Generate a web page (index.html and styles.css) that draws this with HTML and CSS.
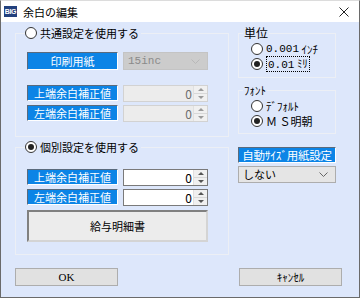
FILE: index.html
```html
<!DOCTYPE html>
<html lang="ja">
<head>
  <meta charset="UTF-8">
  <title>余白の編集</title>
  <link rel="stylesheet" href="styles.css">
</head>
<body>
  <div class="window">
    <!-- Title bar -->
    <div class="titlebar">
      <span class="app-icon">BIG</span>
      <span class="title">余白の編集</span>
      <span class="close">
        <svg width="10" height="10" viewBox="0 0 10 10"><path d="M0.5 0.5L9.5 9.5M9.5 0.5L0.5 9.5" stroke="#222" stroke-width="1"/></svg>
      </span>
    </div>

    <div class="client">
      <div class="panes">
        <div class="col-left">
          <!-- Common settings -->
          <fieldset class="group g-common">
            <legend><span class="radio"></span>共通設定を使用する</legend>
            <div class="row row-paper">
              <span class="tag">印刷用紙</span>
              <div class="select disabled">
                <span class="mono">15inc</span>
                <svg width="9" height="5" viewBox="0 0 9 5"><path d="M0.5 0.5L4.5 4.5L8.5 0.5" fill="none" stroke="#b8b8b8"/></svg>
              </div>
            </div>
            <div class="rows">
              <div class="row">
                <span class="tag">上端余白補正値</span>
                <div class="spin disabled"><span class="val">0</span><span class="arrows"><i class="up"></i><i class="down"></i></span></div>
              </div>
              <div class="row">
                <span class="tag">左端余白補正値</span>
                <div class="spin disabled"><span class="val">0</span><span class="arrows"><i class="up"></i><i class="down"></i></span></div>
              </div>
            </div>
          </fieldset>

          <!-- Individual settings -->
          <fieldset class="group g-own">
            <legend><span class="radio on"></span>個別設定を使用する</legend>
            <div class="rows">
              <div class="row">
                <span class="tag">上端余白補正値</span>
                <div class="spin"><span class="val">0</span><span class="arrows"><i class="up"></i><i class="down"></i></span></div>
              </div>
              <div class="row">
                <span class="tag">左端余白補正値</span>
                <div class="spin"><span class="val">0</span><span class="arrows"><i class="up"></i><i class="down"></i></span></div>
              </div>
            </div>
            <div class="doc-box">給与明細書</div>
          </fieldset>
        </div>

        <div class="col-right">
          <fieldset class="group g-unit">
            <legend>単位</legend>
            <div class="opt"><span class="radio"></span><span class="mono">0.001</span>&nbsp;<span class="kana">ｲﾝﾁ</span></div>
            <div class="opt"><span class="radio on"></span><span class="focus"><span class="mono">0.01</span>&nbsp;<span class="kana">ﾐﾘ</span></span></div>
          </fieldset>

          <fieldset class="group g-font">
            <legend class="kana">ﾌｫﾝﾄ</legend>
            <div class="opt"><span class="radio"></span><span class="kana">ﾃﾞﾌｫﾙﾄ</span></div>
            <div class="opt"><span class="radio on"></span><span>Ｍ Ｓ明朝</span></div>
          </fieldset>

          <span class="tag tag-auto">自動ｻｲｽﾞ用紙設定</span>
          <div class="select">
            <span>しない</span>
            <svg width="9" height="5" viewBox="0 0 9 5"><path d="M0.5 0.5L4.5 4.5L8.5 0.5" fill="none" stroke="#666"/></svg>
          </div>
        </div>
      </div>

      <div class="buttons">
        <button class="btn btn-ok">OK</button>
        <button class="btn">ｷｬﾝｾﾙ</button>
      </div>
    </div>
  </div>
</body>
</html>
```

FILE: styles.css
```css
body {
    margin: 0;
    background: #fff;
    font-family: "Noto Sans CJK JP", sans-serif;
    font-size: 11px;
    color: #000;
}

.window {
    width: 360px;
    height: 298px;
    box-sizing: border-box;
    border: 1px solid #6a6a6a;
    border-top-color: #dcdcdc;
    display: flex;
    flex-direction: column;
}

/* Title bar */
.titlebar {
    height: 21px;
    background: #fff;
    display: flex;
    align-items: center;
    padding-left: 3px;
}

.app-icon {
    width: 13px;
    height: 11px;
    background: #23417e;
    color: #fff;
    font-family: "Liberation Sans", sans-serif;
    font-size: 7px;
    font-weight: bold;
    line-height: 11px;
    text-align: center;
    letter-spacing: -0.3px;
}

.title {
    margin-left: 6px;
    font-size: 11px;
    line-height: 14px;
}

.close {
    margin-left: auto;
    margin-right: 10px;
    display: flex;
}

/* Client area */
.client {
    flex: 1;
    background: #dde7fb;
    padding: 4px 0 0 14px;
}

.panes {
    display: flex;
    gap: 9px;
}

.col-left {
    width: 214px;
    display: flex;
    flex-direction: column;
}

.col-right {
    width: 98px;
    display: flex;
    flex-direction: column;
}

.group {
    margin: 0;
    border: 1px solid #eceff5;
    padding: 0 0 0 11px;
}

.group legend {
    display: flex;
    align-items: center;
    height: 14px;
    line-height: 14px;
    padding: 0 2px 0 0;
    margin-left: -2px;
    font-size: 11px;
}

.radio {
    width: 10px;
    height: 10px;
    border: 1px solid #333;
    border-radius: 50%;
    background: #fff;
    display: inline-flex;
    align-items: center;
    justify-content: center;
    margin-right: 3px;
    flex: none;
}

.radio.on::after {
    content: "";
    width: 6px;
    height: 6px;
    border-radius: 50%;
    background: #222;
}

.g-common {
    padding-top: 12px;
    padding-bottom: 14px;
}

.g-own {
    margin-top: 3px;
    padding-top: 15px;
    padding-bottom: 12px;
}

.row {
    display: flex;
    gap: 5px;
}

.rows {
    display: flex;
    flex-direction: column;
    gap: 3px;
}

.row-paper {
    margin-bottom: 15px;
}

.tag {
    width: 91px;
    height: 16px;
    box-sizing: border-box;
    background: #0c84e6;
    color: #fff;
    border: 1px solid;
    border-color: #5a6a7c #fff #fff #5a6a7c;
    line-height: 14px;
    text-align: center;
    font-size: 11px;
}

.row-paper .tag {
    height: 18px;
    line-height: 16px;
}

.mono {
    font-family: "Liberation Mono", monospace;
    font-size: 11px;
}

.kana {
    font-size: 11px;
}

.select {
    width: 85px;
    height: 17px;
    box-sizing: border-box;
    background: #e5e5e5;
    border: 1px solid #adadad;
    display: flex;
    align-items: center;
    justify-content: space-between;
    padding: 0 7px 0 4px;
    line-height: 15px;
}

.select.disabled {
    height: 18px;
    background: #cccccc;
    border-color: #c4c4c4;
    color: #8a8a8a;
}

.spin {
    width: 85px;
    height: 17px;
    box-sizing: border-box;
    background: #fff;
    border: 1px solid #7a7a7a;
    display: flex;
    line-height: 15px;
}

.spin.disabled {
    background: #ececec;
    border-color: #d2d2d2;
    color: #6d6d6d;
}

.spin .val {
    flex: 1;
    text-align: right;
    padding-right: 1px;
    font-size: 12px;
}

.arrows {
    width: 13px;
    display: flex;
    flex-direction: column;
    border-left: 1px solid #e0e0e0;
}

.arrows i {
    flex: 1;
    display: flex;
    align-items: center;
    justify-content: center;
    background: #f0f0f0;
}

.arrows i.up {
    border-bottom: 1px solid #d8d8d8;
}

.arrows i::after {
    content: "";
    border-left: 3px solid transparent;
    border-right: 3px solid transparent;
}

.arrows i.up::after {
    border-bottom: 3px solid #555;
}

.arrows i.down::after {
    border-top: 3px solid #555;
}

.spin.disabled .arrows i::after {
    border-bottom-color: #9a9a9a;
    border-top-color: #9a9a9a;
}

.spin.disabled .arrows i.up::after {
    border-top-color: transparent;
}

.spin.disabled .arrows i.down::after {
    border-bottom-color: transparent;
}

.doc-box {
    margin-top: 4px;
    width: 181px;
    height: 32px;
    box-sizing: border-box;
    border: 2px solid;
    border-color: #808080 #d4d4d4 #d4d4d4 #808080;
    background: #ececec;
    display: flex;
    align-items: center;
    justify-content: center;
    font-size: 11px;
}

/* Right column */
.g-unit,
.g-font {
    padding-left: 4px;
}

.g-unit {
    padding-top: 1px;
    padding-bottom: 6px;
}

.g-unit legend,
.g-font legend {
    margin-left: 0;
    padding: 0 1px;
}

.g-unit legend {
    font-size: 12px;
}

.g-font {
    margin-top: 5px;
    padding-top: 1px;
    padding-bottom: 5px;
}

.opt {
    height: 15px;
    display: flex;
    align-items: center;
    padding-left: 8px;
    white-space: nowrap;
}

.focus {
    border: 1px dotted #000;
    line-height: 12px;
    padding: 0 1px;
}

.tag-auto {
    width: 98px;
    margin-top: 13px;
    font-size: 11.5px;
    letter-spacing: -0.3px;
    white-space: nowrap;
}

.col-right .select {
    width: 98px;
    margin-top: 3px;
}

/* Buttons */
.buttons {
    width: 327px;
    display: flex;
    justify-content: space-between;
    margin-top: 13px;
}

.btn {
    width: 103px;
    height: 18px;
    background: #e1e1e1;
    border: 1px solid #adadad;
    font-family: "Noto Sans CJK JP", sans-serif;
    font-size: 11px;
    line-height: 14px;
    padding: 0;
    color: #000;
}

.btn-ok {
    font-family: "Liberation Serif", serif;
}
```
